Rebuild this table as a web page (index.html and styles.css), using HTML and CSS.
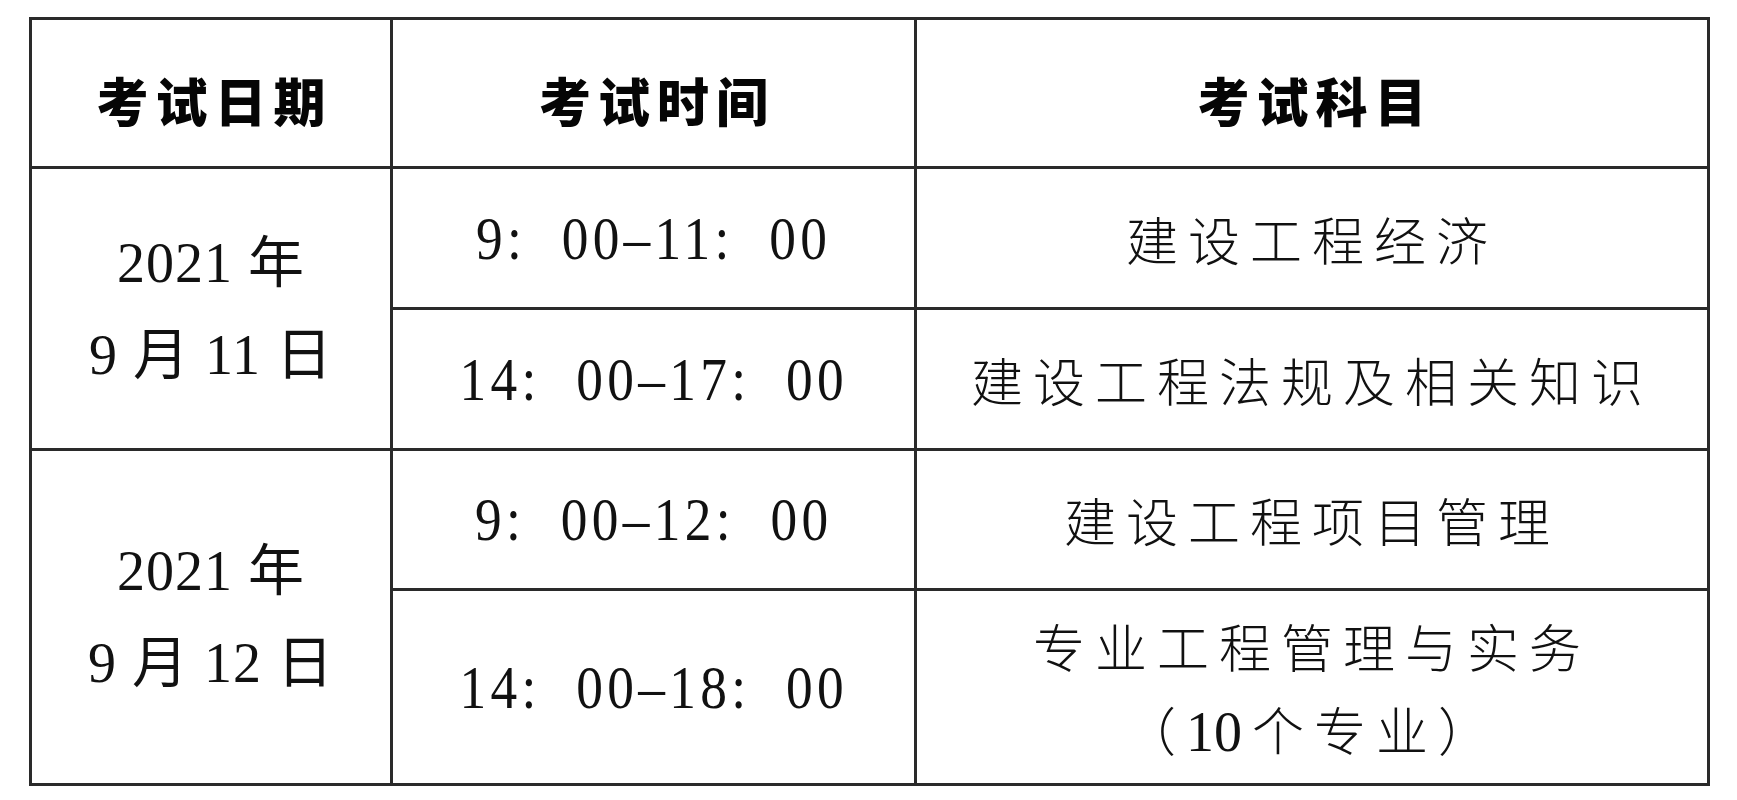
FILE: index.html
```html
<!DOCTYPE html>
<html lang="zh-CN">
<head>
<meta charset="utf-8">
<title>考试安排</title>
<link rel="stylesheet" href="styles.css">
</head>
<body>
<table class="exam">
  <colgroup>
    <col class="c-date">
    <col class="c-time">
    <col class="c-subj">
  </colgroup>
  <thead>
    <tr class="head-row">
      <th>考试日期</th>
      <th>考试时间</th>
      <th>考试科目</th>
    </tr>
  </thead>
  <tbody>
    <tr class="r1">
      <td rowspan="2" class="date">2021 年<br>9 月 11 日</td>
      <td class="time"><span class="tt">9: 00–11: 00</span></td>
      <td class="subj">建设工程经济</td>
    </tr>
    <tr class="r2">
      <td class="time"><span class="tt">14: 00–17: 00</span></td>
      <td class="subj">建设工程法规及相关知识</td>
    </tr>
    <tr class="r3">
      <td rowspan="2" class="date">2021 年<br>9 月 12 日</td>
      <td class="time"><span class="tt">9: 00–12: 00</span></td>
      <td class="subj">建设工程项目管理</td>
    </tr>
    <tr class="r4">
      <td class="time"><span class="tt">14: 00–18: 00</span></td>
      <td class="subj multi">专业工程管理与实务<br>（<span class="num">10</span>个专业）</td>
    </tr>
  </tbody>
</table>
</body>
</html>
```

FILE: styles.css
```css
html, body {
  margin: 0;
  padding: 0;
  background: #ffffff;
}

body {
  padding: 17px 0 0 29px;
  font-family: "Liberation Serif", "Noto Sans CJK SC", serif;
  color: #111111;
}

.exam {
  border-collapse: collapse;
  width: 1678px;
  table-layout: fixed;
}

.c-date { width: 361px; }
.c-time { width: 524px; }
.c-subj { width: 793px; }

.exam th,
.exam td {
  border: 3px solid #2a2a2a;
  text-align: center;
  vertical-align: middle;
  padding: 0;
}

.head-row { height: 149px; }
.r1 { height: 141px; }
.r2 { height: 141px; }
.r3 { height: 140px; }
.r4 { height: 195px; }

.exam th {
  font-family: "Noto Sans CJK SC", sans-serif;
  font-weight: 900;
  font-size: 52px;
  letter-spacing: 7px;
  padding-top: 12px;
  padding-left: 7px;
  color: #050505;
}

.date {
  font-size: 56px;
  line-height: 92px;
  letter-spacing: 1px;
  padding-top: 8px;
}

.time {
  padding-top: 12px;
}

.tt {
  display: inline-block;
  font-size: 62px;
  letter-spacing: 5px;
  word-spacing: 21px;
  transform: scaleX(0.86);
  white-space: nowrap;
}

.subj {
  font-family: "Noto Sans CJK SC", sans-serif;
  font-weight: 300;
  font-size: 52px;
  letter-spacing: 10px;
  padding-top: 10px;
  padding-left: 10px;
}

.subj.multi {
  line-height: 83px;
  padding-top: 4px;
}

.num {
  font-family: "Liberation Serif", serif;
  font-size: 56px;
  letter-spacing: 0;
  margin-right: 10px;
}
```
